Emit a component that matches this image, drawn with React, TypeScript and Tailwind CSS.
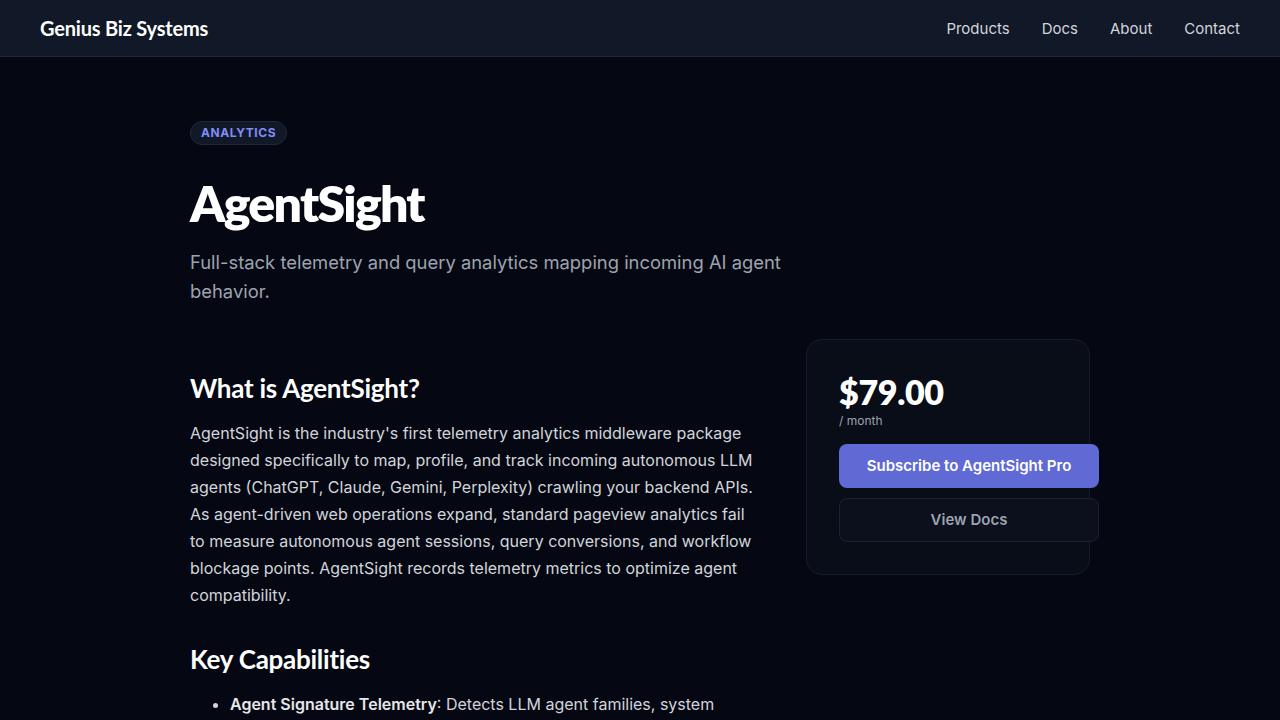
import React from 'react';

const headingFont = "font-['Lato','Inter',sans-serif]";

const navLinks = ['Products', 'Docs', 'About', 'Contact'];

const Header: React.FC = () => (
  <header className="h-[57px] bg-[#111827] border-b border-[#1f2937] flex items-center justify-between px-10">
    <span className={`${headingFont} text-white text-[20px] font-bold tracking-[-0.01em]`}>Genius Biz Systems</span>
    <nav className="flex items-center gap-8">
      {navLinks.map((link) => (
        <a key={link} href="#" className="text-[15px] leading-[22px] pt-[1px] text-[#d1d5db] hover:text-white">
          {link}
        </a>
      ))}
    </nav>
  </header>
);

const PricingCard: React.FC = () => (
  <aside className="w-[284px] self-start rounded-2xl border border-[#161c2b] bg-[#090d18] p-8">
    <div className={`${headingFont} text-white text-[34px] font-extrabold leading-[40px] tracking-[-0.01em]`}>$79.00</div>
    <div className="text-[12px] text-[#9ca3af] leading-4 mt-[1px]">/ month</div>
    <button className="mt-[15px] w-[260px] h-[44px] rounded-lg bg-[#5f6ad4] text-white text-[15px] font-semibold">
      Subscribe to AgentSight Pro
    </button>
    <button className="mt-[10px] w-[260px] h-[44px] rounded-lg border border-[#1a2133] bg-[#0b101c] text-[#9ca3af] text-[15px] font-semibold">
      View Docs
    </button>
  </aside>
);

const App: React.FC = () => {
  return (
    <div className="min-h-screen bg-[#050812] font-['Inter',sans-serif]">
      <Header />
      <main className="max-w-[900px] mx-auto pt-[62px] pb-24">
        <span className="inline-block rounded-full border border-[#1f2937] bg-[#111827] px-[10px] py-[3px] text-[12px] font-bold tracking-[0.05em] text-[#818cf8] leading-4">
          ANALYTICS
        </span>
        <h1 className={`${headingFont} mt-[30px] text-white text-[50px] font-extrabold leading-[56px] tracking-[-0.035em]`}>
          AgentSight
        </h1>
        <p className="mt-[17px] max-w-[600px] text-[18.4px] leading-[29px] text-[#9ca3af]">
          Full-stack telemetry and query analytics mapping incoming AI agent behavior.
        </p>

        <div className="mt-[33px] flex gap-12">
          <section className="flex-1">
            <h2 className={`${headingFont} mt-[33px] text-white text-[26px] font-bold leading-8 tracking-[-0.01em]`}>
              What is AgentSight?
            </h2>
            <p className="mt-[16px] text-[16px] leading-[27px] text-[#d1d5db]">
              AgentSight is the industry's first telemetry analytics middleware package designed specifically to map,
              profile, and track incoming autonomous LLM agents (ChatGPT, Claude, Gemini, Perplexity) crawling your
              backend APIs. As agent-driven web operations expand, standard pageview analytics fail to measure
              autonomous agent sessions, query conversions, and workflow blockage points. AgentSight records telemetry
              metrics to optimize agent compatibility.
            </p>
            <h2 className={`${headingFont} mt-[34px] text-white text-[26px] font-bold leading-8 tracking-[-0.01em]`}>
              Key Capabilities
            </h2>
            <ul className="mt-[16px] list-disc pl-10 text-[16px] leading-[27px] text-[#d1d5db]">
              <li>
                <strong className="font-semibold text-[#e5e7eb]">Agent Signature Telemetry</strong>: Detects LLM agent
                families, system prompts and tool-call patterns across every request.
              </li>
              <li>
                <strong className="font-semibold text-[#e5e7eb]">Query Conversion Mapping</strong>: Tracks how agent
                queries turn into completed workflows.
              </li>
            </ul>
          </section>
          <PricingCard />
        </div>
      </main>
    </div>
  );
};

export default App;
